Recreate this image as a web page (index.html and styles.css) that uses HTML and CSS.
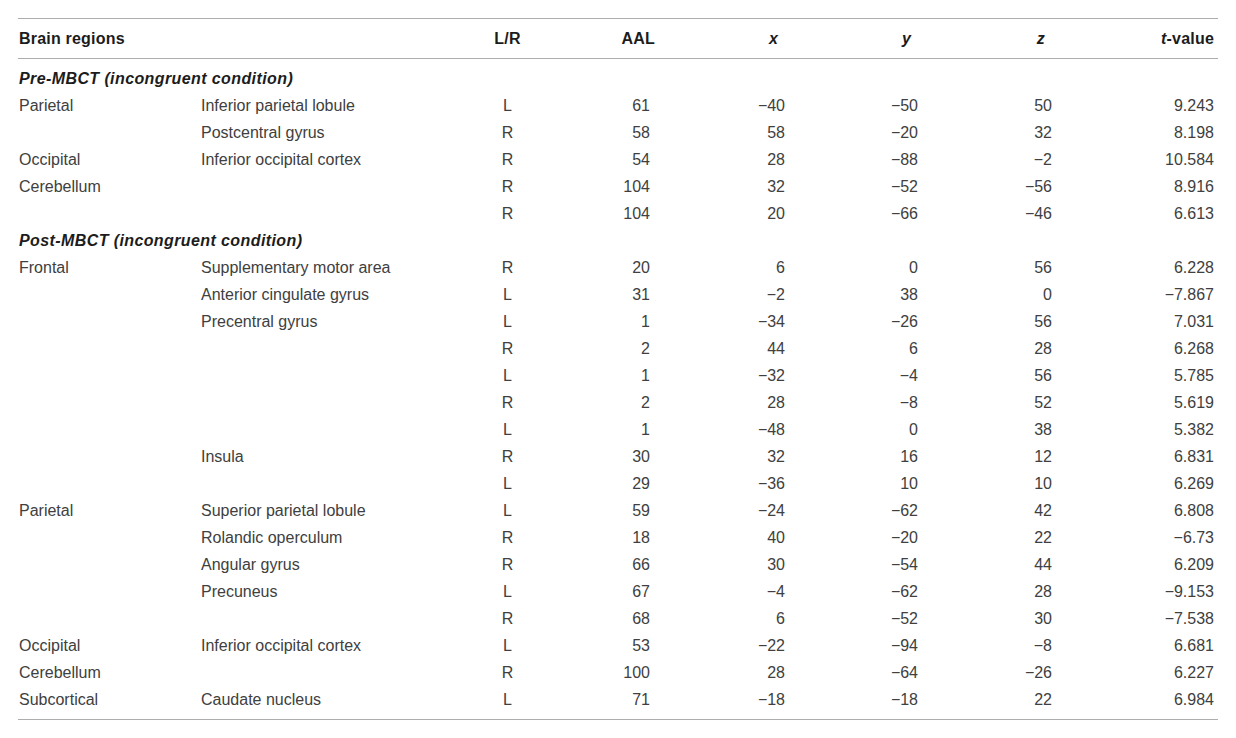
FILE: index.html
```html
<!DOCTYPE html>
<html lang="en">
<head>
<meta charset="utf-8">
<title>Brain regions table</title>
<link rel="stylesheet" href="styles.css">
</head>
<body>
<table class="tbl">
  <colgroup>
    <col class="c-region"><col class="c-sub"><col class="c-lr"><col class="c-aal"><col class="c-x"><col class="c-y"><col class="c-z"><col class="c-t">
  </colgroup>
  <thead>
    <tr>
      <th class="h-left" colspan="2">Brain regions</th>
      <th class="h-lr">L/R</th>
      <th class="h-aal">AAL</th>
      <th class="h-xyz"><i>x</i></th>
      <th class="h-xyz"><i>y</i></th>
      <th class="h-xyz"><i>z</i></th>
      <th class="h-t"><i>t</i>-value</th>
    </tr>
  </thead>
  <tbody>
    <tr class="sec first"><td colspan="8">Pre-MBCT (incongruent condition)</td></tr>
    <tr><td>Parietal</td><td>Inferior parietal lobule</td><td class="lr">L</td><td class="num">61</td><td class="num">−40</td><td class="num">−50</td><td class="num">50</td><td class="tv">9.243</td></tr>
    <tr><td></td><td>Postcentral gyrus</td><td class="lr">R</td><td class="num">58</td><td class="num">58</td><td class="num">−20</td><td class="num">32</td><td class="tv">8.198</td></tr>
    <tr><td>Occipital</td><td>Inferior occipital cortex</td><td class="lr">R</td><td class="num">54</td><td class="num">28</td><td class="num">−88</td><td class="num">−2</td><td class="tv">10.584</td></tr>
    <tr><td>Cerebellum</td><td></td><td class="lr">R</td><td class="num">104</td><td class="num">32</td><td class="num">−52</td><td class="num">−56</td><td class="tv">8.916</td></tr>
    <tr><td></td><td></td><td class="lr">R</td><td class="num">104</td><td class="num">20</td><td class="num">−66</td><td class="num">−46</td><td class="tv">6.613</td></tr>
    <tr class="sec"><td colspan="8">Post-MBCT (incongruent condition)</td></tr>
    <tr><td>Frontal</td><td>Supplementary motor area</td><td class="lr">R</td><td class="num">20</td><td class="num">6</td><td class="num">0</td><td class="num">56</td><td class="tv">6.228</td></tr>
    <tr><td></td><td>Anterior cingulate gyrus</td><td class="lr">L</td><td class="num">31</td><td class="num">−2</td><td class="num">38</td><td class="num">0</td><td class="tv">−7.867</td></tr>
    <tr><td></td><td>Precentral gyrus</td><td class="lr">L</td><td class="num">1</td><td class="num">−34</td><td class="num">−26</td><td class="num">56</td><td class="tv">7.031</td></tr>
    <tr><td></td><td></td><td class="lr">R</td><td class="num">2</td><td class="num">44</td><td class="num">6</td><td class="num">28</td><td class="tv">6.268</td></tr>
    <tr><td></td><td></td><td class="lr">L</td><td class="num">1</td><td class="num">−32</td><td class="num">−4</td><td class="num">56</td><td class="tv">5.785</td></tr>
    <tr><td></td><td></td><td class="lr">R</td><td class="num">2</td><td class="num">28</td><td class="num">−8</td><td class="num">52</td><td class="tv">5.619</td></tr>
    <tr><td></td><td></td><td class="lr">L</td><td class="num">1</td><td class="num">−48</td><td class="num">0</td><td class="num">38</td><td class="tv">5.382</td></tr>
    <tr><td></td><td>Insula</td><td class="lr">R</td><td class="num">30</td><td class="num">32</td><td class="num">16</td><td class="num">12</td><td class="tv">6.831</td></tr>
    <tr><td></td><td></td><td class="lr">L</td><td class="num">29</td><td class="num">−36</td><td class="num">10</td><td class="num">10</td><td class="tv">6.269</td></tr>
    <tr><td>Parietal</td><td>Superior parietal lobule</td><td class="lr">L</td><td class="num">59</td><td class="num">−24</td><td class="num">−62</td><td class="num">42</td><td class="tv">6.808</td></tr>
    <tr><td></td><td>Rolandic operculum</td><td class="lr">R</td><td class="num">18</td><td class="num">40</td><td class="num">−20</td><td class="num">22</td><td class="tv">−6.73</td></tr>
    <tr><td></td><td>Angular gyrus</td><td class="lr">R</td><td class="num">66</td><td class="num">30</td><td class="num">−54</td><td class="num">44</td><td class="tv">6.209</td></tr>
    <tr><td></td><td>Precuneus</td><td class="lr">L</td><td class="num">67</td><td class="num">−4</td><td class="num">−62</td><td class="num">28</td><td class="tv">−9.153</td></tr>
    <tr><td></td><td></td><td class="lr">R</td><td class="num">68</td><td class="num">6</td><td class="num">−52</td><td class="num">30</td><td class="tv">−7.538</td></tr>
    <tr><td>Occipital</td><td>Inferior occipital cortex</td><td class="lr">L</td><td class="num">53</td><td class="num">−22</td><td class="num">−94</td><td class="num">−8</td><td class="tv">6.681</td></tr>
    <tr><td>Cerebellum</td><td></td><td class="lr">R</td><td class="num">100</td><td class="num">28</td><td class="num">−64</td><td class="num">−26</td><td class="tv">6.227</td></tr>
    <tr class="last"><td>Subcortical</td><td>Caudate nucleus</td><td class="lr">L</td><td class="num">71</td><td class="num">−18</td><td class="num">−18</td><td class="num">22</td><td class="tv">6.984</td></tr>
  </tbody>
</table>
</body>
</html>
```

FILE: styles.css
```css
html, body {
  margin: 0;
  padding: 0;
  background: #ffffff;
}

body {
  font-family: "Liberation Sans", Arial, sans-serif;
  font-size: 16px;
  color: #404040;
}

.tbl {
  margin: 18px 0 0 18px;
  width: 1200px;
  table-layout: fixed;
  border-collapse: separate;
  border-spacing: 0;
}

.c-region { width: 182px; }
.c-sub { width: 260px; }
.c-lr { width: 95px; }
.c-aal { width: 105px; }
.c-x { width: 135px; }
.c-y { width: 133px; }
.c-z { width: 134px; }
.c-t { width: 156px; }

.tbl th {
  font-weight: bold;
  color: #1c1c1c;
  line-height: 19px;
  padding: 10px 0;
  border-top: 1px solid #adadad;
  border-bottom: 1px solid #adadad;
  white-space: nowrap;
  letter-spacing: 0.2px;
}

.tbl th i { font-style: italic; }

.h-left { text-align: left; padding-left: 1px !important; }
.h-lr { text-align: center; }
.h-aal { text-align: right; padding-right: 5px !important; }
.h-xyz { text-align: right; padding-right: 17px !important; }
.h-t { text-align: right; padding-right: 4px !important; }

.tbl td {
  line-height: 27px;
  padding: 0 0 0 1px;
  white-space: nowrap;
  vertical-align: middle;
}

.tbl .sec td {
  font-weight: bold;
  font-style: italic;
  color: #1c1c1c;
  letter-spacing: 0.4px;
}

.tbl .first td { padding-top: 6px; }

.tbl .last td {
  padding-bottom: 6px;
  border-bottom: 1px solid #adadad;
}

.tbl td.lr { text-align: center; padding-left: 0; }
.tbl td.num { text-align: right; padding-right: 10px; }
.tbl td.tv { text-align: right; padding-right: 4px; }
```
